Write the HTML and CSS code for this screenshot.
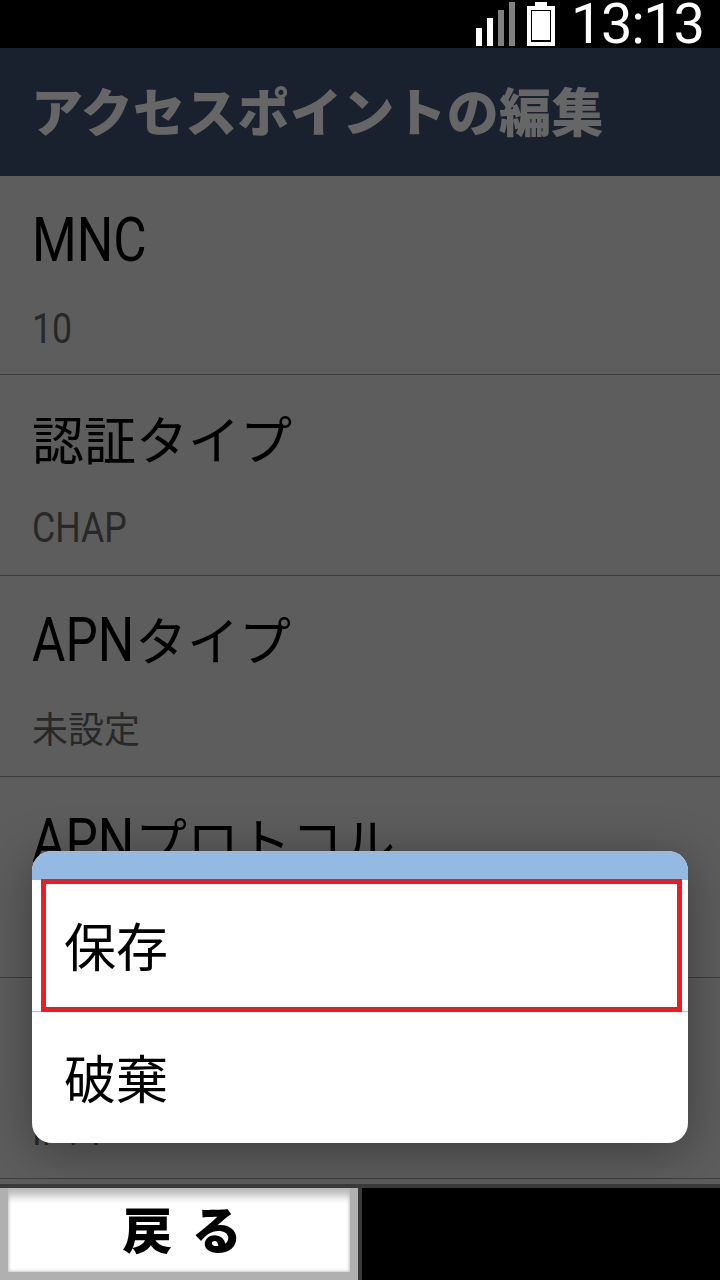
FILE: index.html
```html
<!DOCTYPE html>
<html lang="ja">
<head>
    <meta charset="UTF-8">
    <meta name="viewport" content="width=device-width, initial-scale=1.0">
    <title>アクセスポイントの編集</title>
    <link rel="stylesheet" href="styles.css">
</head>
<body>
    <div class="screen">
        <!-- Status bar -->
        <div class="status-bar">
            <svg class="signal" width="39" height="46" viewBox="0 0 39 46">
                <rect x="0" y="28" width="6" height="18" fill="#fff"/>
                <rect x="11" y="18" width="6" height="28" fill="#fff"/>
                <rect x="22" y="10" width="6" height="36" fill="#808080"/>
                <rect x="33" y="2" width="6" height="44" fill="#808080"/>
            </svg>
            <svg class="battery" width="28" height="46" viewBox="0 0 28 46">
                <path fill="#fff" fill-rule="evenodd" d="M8 2h12v4h8v40H0V6h8zM4 10v32h20V10z"/>
                <rect x="5" y="11" width="18" height="29" fill="#fff"/>
            </svg>
            <span class="clock">13:13</span>
        </div>

        <div class="title-bar">アクセスポイントの編集</div>

        <!-- Settings list -->
        <div class="list">
            <div class="row">
                <div class="row-label"><span class="latin">MNC</span></div>
                <div class="row-value"><span class="latin-small">10</span></div>
            </div>
            <div class="row">
                <div class="row-label">認証タイプ</div>
                <div class="row-value"><span class="latin-small">CHAP</span></div>
            </div>
            <div class="row">
                <div class="row-label"><span class="latin apn">APN</span>タイプ</div>
                <div class="row-value">未設定</div>
            </div>
            <div class="row">
                <div class="row-label"><span class="latin apn">APN</span>プロトコル</div>
                <div class="row-value"><span class="latin-small">IPv4</span></div>
            </div>
            <div class="row">
                <div class="row-label"><span class="latin apn">APN</span>ローミング</div>
                <div class="row-value"><span class="latin-small">IPv4</span></div>
            </div>
        </div>

        <!-- Bottom buttons -->
        <div class="footer">
            <div class="back-button">戻 る</div>
            <div class="footer-blank"></div>
        </div>

        <!-- Save dialog -->
        <div class="dialog">
            <div class="dialog-head"></div>
            <div class="dialog-item selected">保存</div>
            <div class="dialog-item">破棄</div>
        </div>
    </div>
</body>
</html>
```

FILE: styles.css
```css
/* General */
html, body {
    margin: 0;
    padding: 0;
    background: #000;
}

.screen {
    position: relative;
    width: 720px;
    height: 1280px;
    overflow: hidden;
    display: flex;
    flex-direction: column;
    background: #5d5d5d;
    font-family: "Noto Sans CJK JP", "Noto Sans", sans-serif;
}

/* Status bar */
.status-bar {
    height: 48px;
    background: #000;
    display: flex;
    align-items: flex-start;
    justify-content: flex-end;
    flex-shrink: 0;
}

.signal {
    margin-right: 12px;
}

.battery {
    margin-right: 16px;
}

.clock {
    width: 137px;
    font-family: Roboto, sans-serif;
    font-size: 56px;
    letter-spacing: -1.4px;
    line-height: 48px;
    color: #fff;
    white-space: nowrap;
    margin-right: 12px;
}

/* Title */
.title-bar {
    height: 128px;
    flex-shrink: 0;
    box-sizing: border-box;
    padding-left: 31px;
    background: #19212e;
    color: #666;
    font-size: 52px;
    font-weight: 900;
    letter-spacing: 0.3px;
    line-height: 124px;
}

/* List */
.list {
    height: 1008px;
    flex-shrink: 0;
}

.row {
    height: 200px;
    border-bottom: 1px solid #3e3e3e;
    padding-left: 32px;
}

.row:first-child {
    height: 198px;
}

.row-label {
    height: 128px;
    padding-top: 30px;
    box-sizing: border-box;
    color: #000;
    font-size: 52px;
    line-height: 66px;
}

.row-value {
    color: #282828;
    font-size: 36px;
    line-height: 46px;
}

/* Latin text on the device is condensed, squeeze Roboto to match */
.latin {
    display: inline-block;
    font-family: Roboto, sans-serif;
    font-size: 61px;
    transform: scaleX(0.84);
    transform-origin: left center;
}

.latin.apn {
    margin-right: -0.31em;
}

.latin-small {
    display: inline-block;
    font-family: Roboto, sans-serif;
    font-size: 43px;
    transform: scaleX(0.83);
    transform-origin: left center;
}

/* Footer */
.footer {
    position: relative;
    z-index: 2;
    height: 96px;
    flex-shrink: 0;
    display: flex;
    align-items: flex-end;
    background: #3a3a3a;
}

.back-button {
    width: 358px;
    height: 92px;
    box-sizing: border-box;
    padding-left: 6px;
    background: #fff;
    border: 8px solid #b0b0b0;
    border-top-width: 0;
    box-shadow: inset 0 14px 8px -6px #b8b8b8, inset 0 0 3px 1px #c8c8c8;
    color: #000;
    text-align: center;
    font-size: 50px;
    font-weight: 900;
    line-height: 78px;
    word-spacing: 8px;
}

.footer-blank {
    width: 358px;
    height: 92px;
    margin-left: 4px;
    background: #000;
}

/* Dialog */
.dialog {
    position: absolute;
    z-index: 1;
    left: 32px;
    top: 851px;
    width: 656px;
    height: 292px;
    background: #fff;
    border-radius: 20px;
    box-shadow: 0 8px 50px rgba(0, 0, 0, 0.35);
}

.dialog-head {
    height: 29px;
    background: #94b9e2;
    border-radius: 20px 20px 0 0;
}

.dialog-item {
    position: relative;
    height: 131px;
    padding-left: 32px;
    color: #000;
    font-size: 52px;
    line-height: 130px;
}

.dialog-item.selected {
    height: 131px;
    border-bottom: 1px solid #bbb;
}

/* Red focus frame sits on top of the divider and the header edge */
.dialog-item.selected::after {
    content: "";
    position: absolute;
    left: 9px;
    right: 6px;
    top: -1px;
    bottom: -1px;
    border: 5px solid #ed1c24;
}
```
